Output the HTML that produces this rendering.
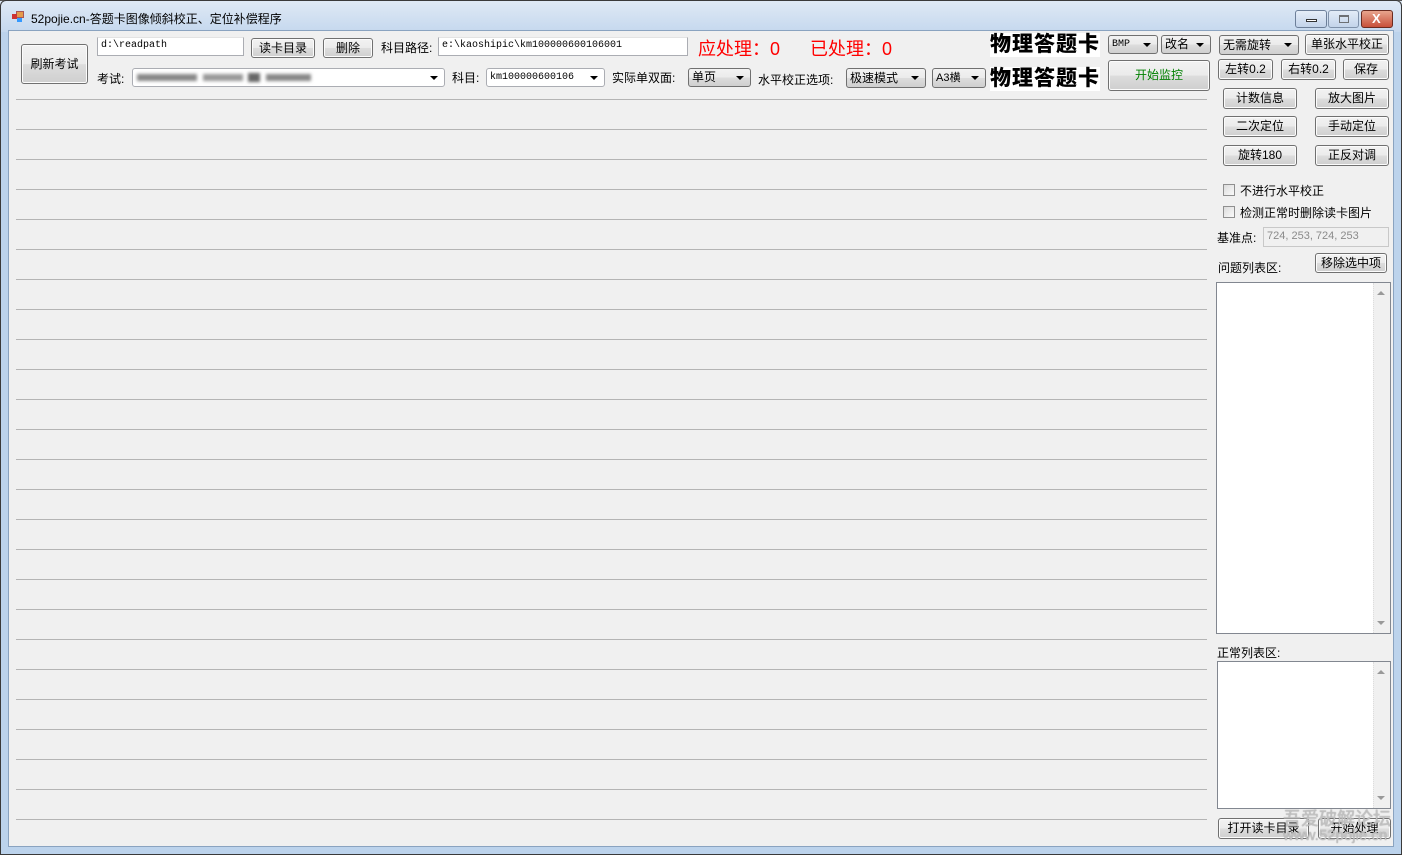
<!DOCTYPE html>
<html><head><meta charset="utf-8"><style>
*{box-sizing:border-box;margin:0;padding:0}
body{width:1402px;height:855px;overflow:hidden;background:#bcd3ec;font-family:"Liberation Sans","Noto Sans CJK SC",sans-serif;font-size:12px;color:#000;position:relative}
.a{position:absolute;white-space:nowrap}
.title{left:0;top:0;width:1402px;height:32px;background:linear-gradient(#dfe9f5,#c5d8ee);border-top:1px solid #555;}
.frame{left:0;top:0;width:1402px;height:855px;border:1px solid #3a3a3a;border-radius:6px 6px 0 0;pointer-events:none}
.client{left:8px;top:30px;width:1386px;height:817px;background:#f0f0f0;border:1px solid #8aa3c0}
.btn{position:absolute;background:linear-gradient(#f2f2f2 0%,#ebebeb 50%,#dddddd 51%,#cfcfcf 100%);border:1px solid #707070;border-radius:3px;text-align:center;font-size:12px;white-space:nowrap;box-shadow:inset 0 0 0 1px #fcfcfc}
.cb{position:absolute;background:linear-gradient(#f2f2f2 0%,#ebebeb 50%,#dddddd 51%,#cfcfcf 100%);border:1px solid #707070;border-radius:3px;font-size:12px;padding-left:3px;white-space:nowrap}
.cb:after{content:"";position:absolute;right:6px;top:7px;border-left:4px solid transparent;border-right:4px solid transparent;border-top:4px solid #000}
.tb{position:absolute;background:#fff;border:1px solid #abadb3;border-top-color:#e3e3e3;font-family:"Liberation Mono","Noto Sans CJK SC",monospace;font-size:10px;padding-left:3px;white-space:nowrap}
.ln{position:absolute;left:16px;width:1191px;height:1px;background:#b4b4b4}
.red{color:#f00;font-size:18px}
.big{background:#fff;font-weight:900;font-size:21px;letter-spacing:1px;height:24px;line-height:24px}
.chk{position:absolute;width:12px;height:12px;border:1px solid #8f8f8f;background:linear-gradient(135deg,#dcdcdc,#fafafa)}
.lb{position:absolute;background:#fff;border:1px solid #828790}
.sb{position:absolute;right:0;top:0;bottom:0;width:17px;background:#f0f0f0;border-left:1px dotted #ddd}
.up{position:absolute;right:5px;top:8px;border-left:4px solid transparent;border-right:4px solid transparent;border-bottom:4px solid #999}
.dn{position:absolute;right:5px;bottom:8px;border-left:4px solid transparent;border-right:4px solid transparent;border-top:4px solid #999}
.wb{position:absolute;top:10px;height:18px;border:1px solid #6d7f99;border-radius:3px;background:linear-gradient(#e6eef8,#c2d3ea)}
</style></head><body>
<div class="a title"></div>
<div class="a" style="left:12px;top:11px;width:12px;height:11px">
 <div class="a" style="left:4px;top:0;width:8px;height:7px;background:#e49a4b;border:1px solid #a55"></div>
 <div class="a" style="left:0;top:3px;width:5px;height:5px;background:#c33"></div>
 <div class="a" style="left:5px;top:7px;width:5px;height:4px;background:#39f"></div>
</div>
<div class="a" style="left:31px;top:10px;font-size:12px">52pojie.cn-答题卡图像倾斜校正、定位补偿程序</div>
<div class="wb" style="left:1295px;width:32px"><div class="a" style="left:10px;top:8px;width:11px;height:3px;border:1px solid #333;background:#fff"></div></div>
<div class="wb" style="left:1328px;width:31px;opacity:.8"><div class="a" style="left:10px;top:4px;width:10px;height:8px;border:1px solid #555;border-top-width:2px"></div></div>
<div class="wb" style="left:1361px;width:32px;background:linear-gradient(#e8a58e,#c8503a);border-color:#6b2b20"><div class="a" style="left:10px;top:0;color:#fff;font-weight:bold;font-size:13px">X</div></div>

<div class="a client"></div>

<div class="btn" style="left:21px;top:44px;width:67px;height:40px;line-height:38px">刷新考试</div>
<div class="tb" style="left:97px;top:37px;width:147px;height:19px;line-height:16px">d:\readpath</div>
<div class="btn" style="left:251px;top:38px;width:64px;height:20px;line-height:18px">读卡目录</div>
<div class="btn" style="left:323px;top:38px;width:50px;height:20px;line-height:18px">删除</div>
<div class="a" style="left:381px;top:39px">科目路径:</div>
<div class="tb" style="left:438px;top:37px;width:250px;height:19px;line-height:16px">e:\kaoshipic\km100000600106001</div>
<div class="a red" style="left:698px;top:35px">应处理：0</div>
<div class="a red" style="left:810px;top:35px">已处理：0</div>
<div class="a big" style="left:990px;top:33px">物理答题卡</div>
<div class="a big" style="left:990px;top:67px">物理答题卡</div>
<div class="cb" style="left:1108px;top:35px;width:50px;height:19px;line-height:17px;font-family:'Liberation Mono';font-size:10px">BMP</div>
<div class="cb" style="left:1161px;top:35px;width:50px;height:19px;line-height:17px">改名</div>
<div class="cb" style="left:1219px;top:35px;width:80px;height:20px;line-height:18px">无需旋转</div>
<div class="btn" style="left:1305px;top:34px;width:84px;height:21px;line-height:19px">单张水平校正</div>

<div class="a" style="left:97px;top:70px">考试:</div>
<div class="cb" style="left:132px;top:68px;width:313px;height:19px;background:#fff;border-color:#abadb3">
 <div class="a" style="left:4px;top:5px;width:60px;height:7px;background:#888;filter:blur(1.5px)"></div>
 <div class="a" style="left:70px;top:5px;width:40px;height:7px;background:#999;filter:blur(1.5px)"></div>
 <div class="a" style="left:115px;top:4px;width:12px;height:9px;background:#666;filter:blur(1.5px)"></div>
 <div class="a" style="left:133px;top:5px;width:45px;height:7px;background:#888;filter:blur(1.5px)"></div>
</div>
<div class="a" style="left:452px;top:69px">科目:</div>
<div class="cb" style="left:486px;top:68px;width:119px;height:19px;line-height:17px;background:#fff;border-color:#abadb3;font-family:'Liberation Mono';font-size:10px">km100000600106</div>
<div class="a" style="left:612px;top:69px">实际单双面:</div>
<div class="cb" style="left:688px;top:68px;width:63px;height:19px;line-height:17px">单页</div>
<div class="a" style="left:758px;top:71px">水平校正选项:</div>
<div class="cb" style="left:846px;top:68px;width:80px;height:20px;line-height:18px">极速模式</div>
<div class="cb" style="left:932px;top:68px;width:54px;height:20px;line-height:18px;font-size:11px">A3横</div>
<div class="btn" style="left:1108px;top:60px;width:102px;height:31px;line-height:29px;color:#008000">开始监控</div>
<div class="btn" style="left:1218px;top:59px;width:55px;height:21px;line-height:19px">左转0.2</div>
<div class="btn" style="left:1281px;top:59px;width:55px;height:21px;line-height:19px">右转0.2</div>
<div class="btn" style="left:1343px;top:59px;width:46px;height:21px;line-height:19px">保存</div>

<div class="btn" style="left:1223px;top:88px;width:74px;height:21px;line-height:19px">计数信息</div>
<div class="btn" style="left:1315px;top:88px;width:74px;height:21px;line-height:19px">放大图片</div>
<div class="btn" style="left:1223px;top:116px;width:74px;height:21px;line-height:19px">二次定位</div>
<div class="btn" style="left:1315px;top:116px;width:74px;height:21px;line-height:19px">手动定位</div>
<div class="btn" style="left:1223px;top:145px;width:74px;height:21px;line-height:19px">旋转180</div>
<div class="btn" style="left:1315px;top:145px;width:74px;height:21px;line-height:19px">正反对调</div>

<div class="chk" style="left:1223px;top:184px"></div><div class="a" style="left:1240px;top:182px">不进行水平校正</div>
<div class="chk" style="left:1223px;top:206px"></div><div class="a" style="left:1240px;top:204px">检测正常时删除读卡图片</div>
<div class="a" style="left:1217px;top:229px">基准点:</div>
<div class="tb" style="left:1263px;top:227px;width:126px;height:20px;line-height:17px;background:#f0f0f0;color:#8a8a8a;border-color:#c8c8c8;font-family:'Liberation Sans';font-size:11px">724, 253, 724, 253</div>
<div class="a" style="left:1218px;top:259px">问题列表区:</div>
<div class="btn" style="left:1315px;top:253px;width:72px;height:20px;line-height:18px">移除选中项</div>
<div class="lb" style="left:1216px;top:282px;width:175px;height:352px"><div class="sb"><div class="up"></div><div class="dn"></div></div></div>
<div class="a" style="left:1217px;top:644px">正常列表区:</div>
<div class="lb" style="left:1217px;top:661px;width:174px;height:148px"><div class="sb"><div class="up"></div><div class="dn"></div></div></div>
<div class="btn" style="left:1218px;top:818px;width:91px;height:21px;line-height:19px">打开读卡目录</div>
<div class="btn" style="left:1318px;top:818px;width:73px;height:21px;line-height:19px">开始处理</div>
<div class="a" style="left:1283px;top:805px;font-size:18px;color:rgba(200,200,200,.85);text-shadow:0 0 1px #888">吾爱破解论坛</div>
<div class="a" style="left:1283px;top:827px;font-size:15px;color:rgba(200,200,200,.85);text-shadow:0 0 1px #888">www.52pojie.cn</div>

<div class="ln" style="top:99px"></div><div class="ln" style="top:129px"></div><div class="ln" style="top:159px"></div><div class="ln" style="top:189px"></div><div class="ln" style="top:219px"></div><div class="ln" style="top:249px"></div><div class="ln" style="top:279px"></div><div class="ln" style="top:309px"></div><div class="ln" style="top:339px"></div><div class="ln" style="top:369px"></div><div class="ln" style="top:399px"></div><div class="ln" style="top:429px"></div><div class="ln" style="top:459px"></div><div class="ln" style="top:489px"></div><div class="ln" style="top:519px"></div><div class="ln" style="top:549px"></div><div class="ln" style="top:579px"></div><div class="ln" style="top:609px"></div><div class="ln" style="top:639px"></div><div class="ln" style="top:669px"></div><div class="ln" style="top:699px"></div><div class="ln" style="top:729px"></div><div class="ln" style="top:759px"></div><div class="ln" style="top:789px"></div><div class="ln" style="top:819px"></div>
<div class="a frame"></div>
</body></html>
